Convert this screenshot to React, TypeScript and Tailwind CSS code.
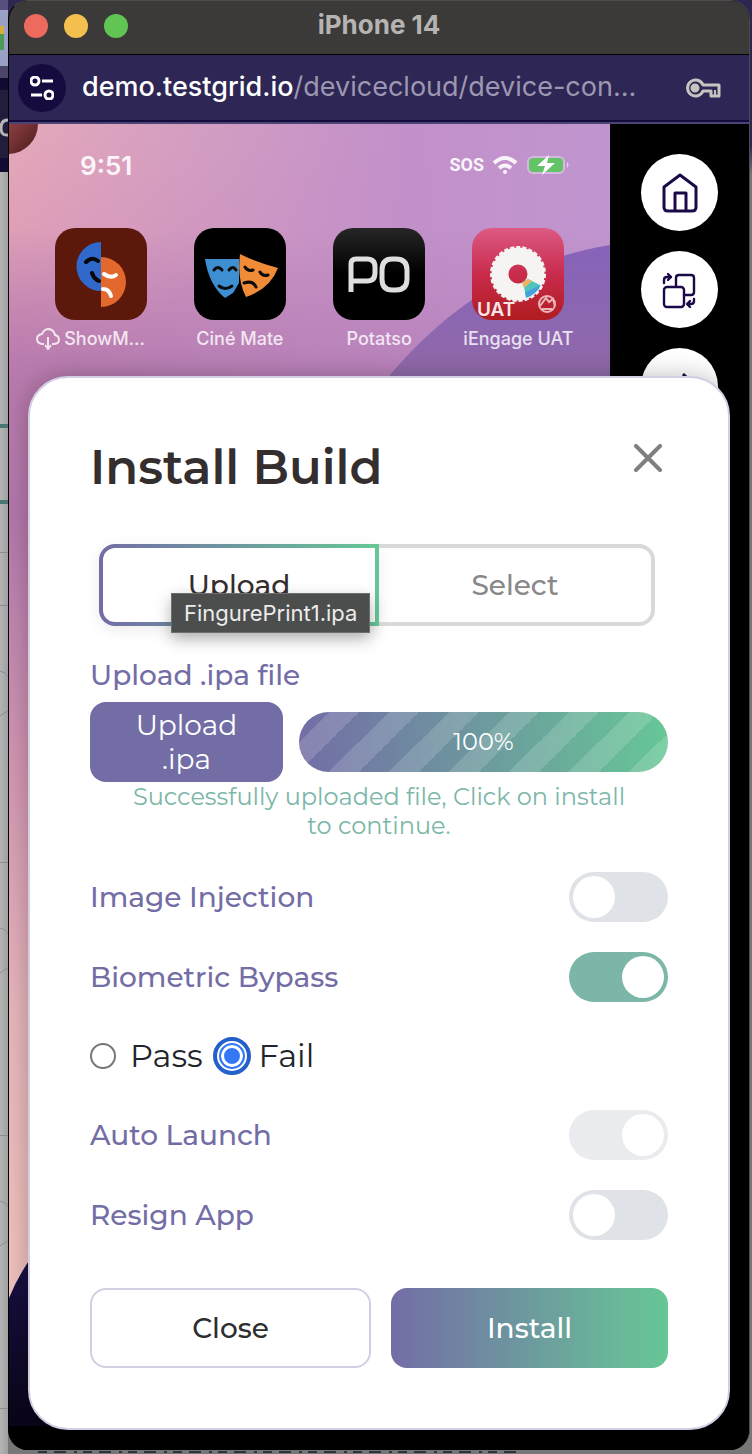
import { useState } from "react";
import type { ReactNode } from "react";

type ToggleRowProps = {
  id: string;
  label: string;
  defaultChecked?: boolean;
  disabled?: boolean;
};

function ShowMIcon() {
  return (
    <svg viewBox="0 0 92 92" className="size-full" aria-hidden>
      <rect width="92" height="92" fill="#5c190b" />
      <path d="M46 14a24.500 24.500 0 0 0 0 49z" fill="#3168cb" />
      <path d="M46 29a24.500 24.500 0 0 1 0 50z" fill="#e2682e" />
      <g fill="none" strokeWidth="4" strokeLinecap="round">
        <path d="M31 34q6-6 12-1M37 45q2 6 7 8" stroke="#080808" />
        <path d="M49 46q7 5 12 1M48 61q6 0 8 7" stroke="#fff" />
      </g>
    </svg>
  );
}

function CineMateIcon() {
  return (
    <svg viewBox="0 0 92 92" className="size-full" aria-hidden>
      <rect width="92" height="92" fill="#000" />
      <path d="M11 31h34v24l-6 10-8 5Q15 57 11 31z" fill="#3d8fd1" />
      <path d="M46 26q18 9 38 14-8 21-32 29-9-17-6-43z" fill="#f08c38" />
      <g fill="none" stroke="#0b0b0b" strokeWidth="3" strokeLinecap="round">
        <path d="M20 42q4-5 8 0M35 42q4-5 7 0M25 58q6 5 13 0" />
        <path d="M51 39q3 5 8 3M66 44q3 5 8 3M50 55q9-3 12 4" />
      </g>
    </svg>
  );
}

function PotatsoIcon() {
  return (
    <svg viewBox="0 0 92 92" className="size-full" aria-hidden>
      <defs>
        <linearGradient id="potatso" x1="0" y1="0" x2="0" y2="1">
          <stop offset="0" stopColor="#262626" />
          <stop offset="0.5" stopColor="#000" />
        </linearGradient>
      </defs>
      <rect width="92" height="92" fill="url(#potatso)" />
      <path
        d="M18 64V36q0-5 5-5h11q8 0 8 8v6q0 8-8 8H20M59 31h4q11 0 11 11v9q0 11-11 11h-4q-10 0-10-11v-9q0-11 10-11z"
        fill="none"
        stroke="#dedede"
        strokeWidth="5"
      />
    </svg>
  );
}

function IEngageIcon() {
  return (
    <svg viewBox="0 0 92 92" className="size-full" aria-hidden>
      <defs>
        <linearGradient id="iengage" x1="0" y1="0" x2="0" y2="1">
          <stop offset="0" stopColor="#dc5a84" />
          <stop offset="0.5" stopColor="#c92c4c" />
          <stop offset="1" stopColor="#b01c20" />
        </linearGradient>
      </defs>
      <rect width="92" height="92" fill="url(#iengage)" />
      <circle cx="46" cy="46" r="18" fill="none" stroke="#f6f3f3" strokeWidth="17" />
      <circle cx="46" cy="46" r="26" fill="none" stroke="#f6f3f3" strokeWidth="4" strokeDasharray="4 2" />
      <path d="M51 54l5-3 12 6q-5 9-14 12z" fill="#4fc6bd" />
      <path d="M60 61l9-4q-5 10-15 13l-1-6z" fill="#45a1dc" />
      <path d="M50 55l6-4 4 2-8 7z" fill="#f0b560" />
      <text x="5" y="88" fill="#f7e6e8" fontSize="19" fontWeight="600" fontFamily="Inter, sans-serif">
        UAT
      </text>
      <g fill="none" stroke="#eab4b8" strokeWidth="2">
        <circle cx="75" cy="76" r="8" />
        <path d="M68 78l6-8 3 4 4-3 2 7M70 81h10" />
      </g>
    </svg>
  );
}

const apps = [
  { name: "ShowM...", icon: ShowMIcon, cloud: true },
  { name: "Ciné Mate", icon: CineMateIcon, cloud: false },
  { name: "Potatso", icon: PotatsoIcon, cloud: false },
  { name: "iEngage UAT", icon: IEngageIcon, cloud: false },
];

function Wallpaper() {
  return (
    <svg
      viewBox="0 0 602 1302"
      preserveAspectRatio="none"
      className="absolute inset-0 size-full"
      aria-hidden
    >
      <defs>
        <linearGradient id="sky" x1="0" y1="0" x2="0" y2="1">
          <stop offset="0" stopColor="#e5a9ba" />
          <stop offset="0.08" stopColor="#df9fb7" />
          <stop offset="0.18" stopColor="#c184b5" />
          <stop offset="0.3" stopColor="#b479ad" />
          <stop offset="0.5" stopColor="#d297b2" />
          <stop offset="0.68" stopColor="#e6b5bb" />
          <stop offset="1" stopColor="#f3c7bc" />
        </linearGradient>
        <linearGradient id="glow" x1="0" y1="0" x2="1" y2="0">
          <stop offset="0" stopColor="#be91cc" stopOpacity="0" />
          <stop offset="0.65" stopColor="#c18fca" stopOpacity="0.95" />
          <stop offset="1" stopColor="#c095cf" />
        </linearGradient>
        <linearGradient id="shade" x1="0" y1="0" x2="0" y2="1">
          <stop offset="0.2" stopColor="#a8689c" stopOpacity="0" />
          <stop offset="0.5" stopColor="#a8689c" stopOpacity="0.35" />
          <stop offset="0.9" stopColor="#a8689c" stopOpacity="0" />
        </linearGradient>
        <linearGradient id="orb" x1="0" y1="0" x2="0" y2="1">
          <stop offset="0" stopColor="#8763ba" />
          <stop offset="1" stopColor="#9069a8" />
        </linearGradient>
        <linearGradient id="night" x1="0" y1="0" x2="0" y2="1">
          <stop offset="0" stopColor="#171c5c" />
          <stop offset="0.5" stopColor="#160d38" />
          <stop offset="1" stopColor="#0a0518" />
        </linearGradient>
        <linearGradient id="corner" x1="0" y1="0" x2="1" y2="1">
          <stop offset="0" stopColor="#8d3f42" />
          <stop offset="1" stopColor="#4a1a1c" />
        </linearGradient>
      </defs>
      <rect width="602" height="1302" fill="url(#sky)" />
      <rect width="602" height="270" fill="url(#glow)" />
      <rect width="602" height="520" fill="url(#shade)" />
      <path d="M379 254C440 182 510 136 602 121V254z" fill="url(#orb)" />
      <path d="M0 1174Q9 1152 22 1134L80 1060V1302H0z" fill="url(#night)" />
      <path d="M0 0H29A30 30 0 0 1 0 30z" fill="url(#corner)" />
    </svg>
  );
}

function PhoneScreen() {
  return (
    <div className="relative min-w-0 flex-1">
      <Wallpaper />
      <div className="relative font-['Inter',sans-serif]">
        <div className="flex h-[82px] items-center justify-between pl-[71px] pr-10 text-white/90">
          <span className="text-[26px] font-semibold">9:51</span>
          <div className="flex items-center gap-2">
            <span className="font-['Roboto',sans-serif] text-lg font-bold">SOS</span>
            <svg viewBox="0 0 26 20" className="h-5 w-[26px]" fill="none" stroke="currentColor" strokeWidth="4" aria-hidden>
              <path d="M2 8q11-10 22 0M7 13q6-5 12 0" />
              <circle cx="13" cy="17" r="2" fill="currentColor" stroke="none" />
            </svg>
            <svg viewBox="0 0 44 22" className="h-[22px] w-11" aria-hidden>
              <rect x="1" y="2" width="38" height="18" rx="6" fill="#fff" fillOpacity="0.35" />
              <rect x="3" y="4" width="34" height="14" rx="4" fill="#62c466" />
              <path d="M41 8q3 3 0 6z" fill="#fff" fillOpacity="0.6" />
              <path d="M23 1L11 12h8l-3 9 13-12h-8z" fill="#fff" />
            </svg>
          </div>
        </div>
        <ul className="mt-[22px] grid grid-cols-4 px-[22px]">
          {apps.map(({ name, icon: Icon, cloud }) => (
            <li key={name} className="flex flex-col items-center gap-[7px]">
              <div className="size-[92px] overflow-hidden rounded-[20px]">
                <Icon />
              </div>
              <span
                className={`flex items-center gap-1 whitespace-nowrap text-lg font-medium leading-6 text-white/80 ${
                  cloud ? "pr-5" : ""
                }`}
              >
                {cloud && (
                  <svg viewBox="0 0 24 22" className="h-[22px] w-6" fill="none" stroke="currentColor" strokeWidth="2" aria-hidden>
                    <path d="M8 16H6q-5-1-5-5 0-4 5-5 2-5 7-5 5 1 6 6 4 1 4 5 0 4-6 4h-1M12 9v11M9 17l3 4 3-4" />
                  </svg>
                )}
                {name}
              </span>
            </li>
          ))}
        </ul>
      </div>
    </div>
  );
}

function DeviceButton({ label, children }: { label: string; children: ReactNode }) {
  return (
    <button
      type="button"
      aria-label={label}
      className="flex size-[77px] items-center justify-center rounded-full bg-white text-[#1b0a47]"
    >
      {children}
    </button>
  );
}

function DeviceControls() {
  return (
    <div className="flex w-[139px] shrink-0 flex-col items-center gap-5 bg-black pt-[30px]">
      <DeviceButton label="Home">
        <svg viewBox="0 0 36 40" className="h-10 w-9" fill="none" stroke="currentColor" strokeWidth="3" strokeLinejoin="round" aria-hidden>
          <path d="M2 14L18 2l16 12v20q0 4-4 4H6q-4 0-4-4z" />
          <path d="M13 38V20h11v18" />
        </svg>
      </DeviceButton>
      <DeviceButton label="Rotate">
        <svg viewBox="0 0 36 38" className="h-[38px] w-9" fill="none" stroke="currentColor" strokeWidth="2.400" strokeLinecap="round" strokeLinejoin="round" aria-hidden>
          <path d="M14 15V7q0-3 3-3h12q3 0 3 3v14q0 3-3 3h-7" />
          <rect x="2" y="16" width="20" height="20" rx="3" />
          <path d="M2 12V9q0-3 3-3h4M6 3l3 3-3 3M32 28v2q0 3-3 3h-3M28 30l-3 3 3 3" />
        </svg>
      </DeviceButton>
      <DeviceButton label="Swipe">
        <svg viewBox="0 0 36 38" className="h-[38px] w-9" fill="none" stroke="currentColor" strokeWidth="3" aria-hidden>
          <path d="M4 15h26M21 6l9 9-9 9" />
        </svg>
      </DeviceButton>
    </div>
  );
}

function ToggleRow({ id, label, defaultChecked, disabled }: ToggleRowProps) {
  return (
    <div className="flex h-[50px] items-center justify-between">
      <label htmlFor={id} className="text-[28px] font-medium leading-9 text-[#736da6]">
        {label}
      </label>
      <input
        id={id}
        type="checkbox"
        role="switch"
        defaultChecked={defaultChecked}
        disabled={disabled}
        className="h-[50px] w-[99px] shrink-0 appearance-none rounded-full bg-[#dfe2e7] p-1 before:block before:size-[42px] before:rounded-full before:bg-white checked:bg-[#7bb6a8] checked:before:ml-[49px] disabled:bg-[#eaebef]"
      />
    </div>
  );
}

const radioClass =
  "size-[26px] shrink-0 appearance-none rounded-full border-2 border-[#767676] bg-white checked:border-[#3478f6] checked:bg-[#3478f6] checked:shadow-[inset_0_0_0_3px_#fff] checked:outline-4 checked:outline-offset-2 checked:outline-[#2460ca]";

function InstallDialog() {
  const [tab, setTab] = useState("upload");
  const [result, setResult] = useState("fail");

  return (
    <section
      role="dialog"
      aria-labelledby="dialog-title"
      className="relative col-start-1 row-start-1 mx-[19px] mb-5 mt-[252px] rounded-[40px] border-2 border-[#d2cfe3] bg-white px-[60px] py-[60px] font-['Montserrat','Inter',sans-serif] shadow-[0_0_24px_rgba(0,0,0,0.25)]"
    >
      <header className="flex h-14 items-start justify-between">
        <h1 id="dialog-title" className="text-5xl font-semibold leading-[58px] text-[#352e2e]">
          Install Build
        </h1>
        <button type="button" aria-label="Close dialog" className="flex size-10 items-center justify-center text-[#808080]">
          <svg viewBox="0 0 28 28" className="size-7" stroke="currentColor" strokeWidth="4" strokeLinecap="round" aria-hidden>
            <path d="M2 2l24 24M26 2L2 26" />
          </svg>
        </button>
      </header>

      <div role="tablist" className="relative ml-[9px] mr-[13px] mt-[50px] flex h-[82px] text-[28px] font-medium">
        <button
          type="button"
          role="tab"
          aria-selected={tab === "upload"}
          onClick={() => setTab("upload")}
          className="flex-1 rounded-l-2xl border-4 border-transparent text-[#352e2e] shadow-[0_4px_16px_rgba(0,0,0,0.08)] [background:linear-gradient(#fff,#fff)_padding-box,linear-gradient(90deg,#736da6,#66c796)_border-box]"
        >
          Upload
        </button>
        <button
          type="button"
          role="tab"
          aria-selected={tab === "select"}
          onClick={() => setTab("select")}
          className="flex-1 rounded-r-2xl border-4 border-l-0 border-[#d9d9d9] text-[#888]"
        >
          Select
        </button>
        <div
          role="tooltip"
          className="absolute left-[72px] top-[49px] border border-[#6d6f6f] bg-[#4b4e4d] px-3 font-['Inter',sans-serif] text-[22px] font-normal leading-[38px] text-[#ececec] shadow-[0_6px_16px_rgba(0,0,0,0.3)]"
        >
          FingurePrint1.ipa
        </div>
      </div>

      <h2 className="mt-8 text-[28px] font-medium leading-[34px] text-[#736da6]">Upload .ipa file</h2>
      <div className="mt-[10px] flex items-center gap-4">
        <button
          type="button"
          className="h-20 w-[193px] shrink-0 rounded-2xl bg-[#736da6] px-10 text-[28px] leading-[34px] text-white"
        >
          Upload .ipa
        </button>
        <div
          role="progressbar"
          aria-valuenow={100}
          aria-valuemin={0}
          aria-valuemax={100}
          className="flex h-[60px] flex-1 items-center justify-center rounded-full text-2xl text-white [background:linear-gradient(-45deg,#ffffff26_25%,transparent_25%,transparent_50%,#ffffff26_50%,#ffffff26_75%,transparent_75%)_0_0/60px_60px,linear-gradient(90deg,#736da6,#66c796)]"
        >
          100%
        </div>
      </div>
      <p className="px-8 text-center text-2xl leading-[29px] text-[#7bb6a8]">
        Successfully uploaded file, Click on install to continue.
      </p>

      <div className="mt-8 flex flex-col gap-[30px]">
        <ToggleRow id="image-injection" label="Image Injection" />
        <ToggleRow id="biometric-bypass" label="Biometric Bypass" defaultChecked />
        <div className="flex h-12 items-center gap-4 text-[32px] text-[#212529]">
          <label className="flex items-center gap-[14px]">
            <input
              type="radio"
              name="result"
              checked={result === "pass"}
              onChange={() => setResult("pass")}
              className={radioClass}
            />
            Pass
          </label>
          <label className="flex items-center gap-[14px]">
            <input
              type="radio"
              name="result"
              checked={result === "fail"}
              onChange={() => setResult("fail")}
              className={radioClass}
            />
            Fail
          </label>
        </div>
        <ToggleRow id="auto-launch" label="Auto Launch" defaultChecked disabled />
        <ToggleRow id="resign-app" label="Resign App" />
      </div>

      <footer className="mt-12 flex h-20 gap-5 text-[28px] font-medium">
        <button type="button" className="flex-1 rounded-2xl border-2 border-[#d2cfe3] text-[#2e2e2e]">
          Close
        </button>
        <button type="button" className="flex-1 rounded-2xl bg-linear-to-r/srgb from-[#736da6] to-[#66c796] text-white">
          Install
        </button>
      </footer>
    </section>
  );
}

function BackdropLeft() {
  return (
    <div className="flex w-2 shrink-0 flex-col overflow-hidden bg-linear-to-r from-[#b4b4b4] to-[#a0a0a0]" aria-hidden>
      <div className="h-[10px] bg-[#57507f]" />
      <div className="flex h-14 flex-col bg-[#9aa0c6] pt-4">
        <div className="h-2 w-1 bg-[#d9ad3c]" />
        <div className="h-4 w-1 bg-[#4b9a55]" />
      </div>
      <div className="h-3 bg-[#4b4668]" />
      <div className="h-3 bg-[#110a33]" />
      <div className="h-[68px] bg-[#221d3d] pt-5">
        <svg viewBox="0 0 8 32" className="h-8 w-2" fill="none" stroke="#b5b5b5" strokeWidth="3">
          <path d="M8 10Q1 10 1 18t7 7" />
        </svg>
      </div>
      <div className="h-[14px] bg-[#110a33]" />
      <div className="mt-[252px] h-1 bg-[#477770]" />
      <div className="mt-[72px] h-1 bg-[#477770]" />
      <div className="mt-12 h-px bg-[#8c8c8c]" />
      <div className="mt-[52px] h-px bg-[#8c8c8c]" />
      <svg viewBox="0 0 8 48" className="mt-16 h-12 w-2" fill="none" stroke="#8c8c8c">
        <path d="M0 1Q6 2 8 7M0 46q5-4 8-5" />
      </svg>
      <div className="mt-36 h-px bg-[#8c8c8c]" />
      <svg viewBox="0 0 8 48" className="mt-16 h-12 w-2" fill="none" stroke="#8c8c8c">
        <path d="M0 1Q6 2 8 7M0 46q5-4 8-5" />
      </svg>
      <div className="mt-40 h-px bg-[#8c8c8c]" />
      <svg viewBox="0 0 8 48" className="mt-16 h-12 w-2" fill="none" stroke="#8c8c8c">
        <path d="M0 1Q6 2 8 7M0 46q5-4 8-5" />
      </svg>
      <div className="mt-40 h-px bg-[#8c8c8c]" />
    </div>
  );
}

export default function App() {
  return (
    <div className="flex min-h-screen bg-linear-to-b from-[#2d2750] from-10% to-[#777] to-12%">
      <BackdropLeft />
      <div className="flex min-w-0 flex-1 flex-col">
        <div className="mr-[2px] flex flex-1 flex-col overflow-hidden rounded-[20px] border-x border-t border-[#4c4c4c] border-l-black bg-black">
          <div className="grid h-[54px] grid-cols-[1fr_auto_1fr] items-center border-b border-black bg-[#3b3a38] px-[15px] pb-1">
            <div className="flex gap-4">
              <button type="button" aria-label="Close window" className="size-6 rounded-full bg-[#ed6a5e]" />
              <button type="button" aria-label="Minimize window" className="size-6 rounded-full bg-[#f5bf4f]" />
              <button type="button" aria-label="Zoom window" className="size-6 rounded-full bg-[#61c554]" />
            </div>
            <span className="pb-[2px] font-['Inter',sans-serif] text-[26px] font-bold leading-8 text-[#b5b4b2]">
              iPhone 14
            </span>
          </div>
          <div className="flex h-[65px] items-center gap-4 bg-[#2e2654] pl-[9px] pr-7">
            <button
              type="button"
              aria-label="Site information"
              className="flex size-12 shrink-0 items-center justify-center rounded-full bg-[#150b3e] text-white"
            >
              <svg viewBox="0 0 24 24" className="size-6" fill="none" stroke="currentColor" strokeWidth="3" aria-hidden>
                <circle cx="5" cy="5" r="4" />
                <path d="M12 5h11M1 19h11" />
                <circle cx="19" cy="19" r="4" />
              </svg>
            </button>
            <p className="min-w-0 flex-1 truncate font-['Inter',sans-serif] text-[27px] text-[#9d97b2]">
              <span className="font-medium text-white">demo.testgrid.io</span>/devicecloud/device-con...
            </p>
            <svg viewBox="0 0 36 20" className="h-5 w-9 shrink-0" fill="none" stroke="#c8c5c0" strokeWidth="3" strokeLinejoin="round" aria-hidden>
              <circle cx="10" cy="10" r="3" fill="#c8c5c0" />
              <path d="M18 7A8 8 0 1 0 18 13H26V18H34V7z" />
              <path d="M30 12v6" strokeWidth="2" />
            </svg>
          </div>
          <div className="h-1 border-b-2 border-[#4b4574] bg-[#150b3e]" />
          <main className="grid flex-1 bg-black">
            <div className="col-start-1 row-start-1 mb-6 flex">
              <PhoneScreen />
              <DeviceControls />
            </div>
            <InstallDialog />
          </main>
        </div>
        <svg viewBox="0 0 560 4" className="ml-5 h-1 w-[560px]" aria-hidden>
          <path d="M10 2H490" stroke="#2f333c" strokeWidth="2" strokeDasharray="9 7 12 8 3 6" />
        </svg>
      </div>
    </div>
  );
}
